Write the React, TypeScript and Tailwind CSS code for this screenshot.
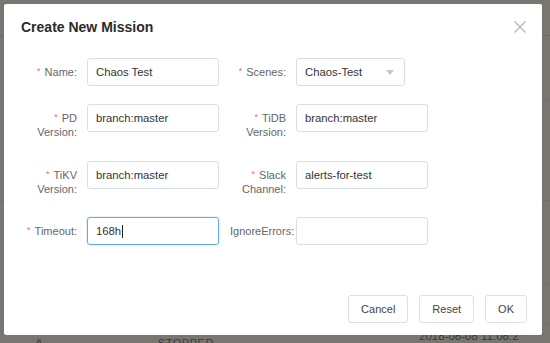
import React from "react";

const Req = () => <span className="text-[#f26b6b] text-[9px] mr-[4px] relative top-[-2px]">*</span>;

function Label({ children, req = true, lines }: { children?: React.ReactNode; req?: boolean; lines?: [string, string] }) {
  return (
    <div className="w-[56px] shrink-0 text-right text-[11px] leading-[12.5px] text-[#666] pt-[8px] whitespace-nowrap">
      {lines ? (
        <>
          <div>{req && <Req />}{lines[0]}</div>
          <div>{lines[1]}</div>
        </>
      ) : (
        <div>{req && <Req />}{children}</div>
      )}
    </div>
  );
}

function Input({ value, focused = false, w = "w-[132px]" }: { value: string; focused?: boolean; w?: string }) {
  return (
    <div
      className={`${w} h-[28px] shrink-0 rounded-[3px] border flex items-center pl-[8px] text-[11.3px] text-[#333] ${
        focused ? "border-[#66a9ee] shadow-[0_0_0_1px_rgba(102,169,238,0.15)]" : "border-[#d9dee6]"
      }`}
    >
      <span>{value}</span>
      {focused && <span className="w-px h-[13px] bg-[#222] ml-[1px]" />}
    </div>
  );
}

export default function App() {
  return (
    <div className="w-[550px] h-[343px] bg-[#787671] relative overflow-hidden font-['Liberation_Sans',Arial,sans-serif]">
      {/* background page content behind overlay */}
      <div className="absolute left-0 right-0 top-[35px] h-px bg-[#6c6a66]" />
      <div className="absolute left-0 right-0 top-[100px] h-px bg-[#706e6a]" />
      <div className="absolute left-0 right-0 top-[200px] h-px bg-[#706e6a]" />
      <div className="absolute left-0 right-0 top-[283px] h-px bg-[#706e6a]" />
      <div className="absolute left-0 right-0 top-[323px] h-px bg-[#706e6a]" />
      <div className="absolute left-[158px] top-[335px] text-[11px] text-[#3a3936] tracking-[0.5px]">STOPPED</div>
      <div className="absolute left-[419px] top-[328px] text-[11.5px] text-[#3a3936]">2018-08-08 11:08:2</div>
      <div className="absolute left-[36px] top-[336px] text-[10px] text-[#3a3936]">ñ</div>

      {/* modal */}
      <div className="relative ml-[4px] mt-[4px] w-[538px] h-[331px] bg-white rounded-[2px] flex flex-col">
        <svg className="absolute right-[16px] top-[17px]" width="12" height="12" viewBox="0 0 12 12">
          <path d="M0.5 0.5 L11.5 11.5 M11.5 0.5 L0.5 11.5" stroke="#b5b8bd" strokeWidth="1.3" fill="none" />
        </svg>
        <div className="h-[54px] pl-[17px] pt-[15px]">
          <div className="text-[14px] leading-[16px] font-bold text-[#2b2b2b]">Create New Mission</div>
        </div>

        <div className="pl-[17px] flex flex-col">
          {/* row 1 */}
          <div className="h-[46px] flex gap-[11px]">
            <div className="w-[198px] flex gap-[10px]">
              <Label>Name:</Label>
              <Input value="Chaos Test" />
            </div>
            <div className="w-[198px] flex gap-[10px]">
              <Label>Scenes:</Label>
              <div className="w-[109px] h-[28px] shrink-0 rounded-[3px] border border-[#d9dee6] flex items-center justify-between pl-[8px] pr-[10px] text-[11.3px] text-[#333]">
                <span>Chaos-Test</span>
                <svg width="8" height="5" viewBox="0 0 8 5">
                  <path d="M0 0 L8 0 L4 5 Z" fill="#c4c7cc" />
                </svg>
              </div>
            </div>
          </div>
          {/* row 2 */}
          <div className="h-[57px] flex gap-[11px]">
            <div className="w-[198px] flex gap-[10px]">
              <Label lines={["PD", "Version:"]} />
              <Input value="branch:master" />
            </div>
            <div className="w-[198px] flex gap-[10px]">
              <Label lines={["TiDB", "Version:"]} />
              <Input value="branch:master" />
            </div>
          </div>
          {/* row 3 */}
          <div className="h-[56px] flex gap-[11px]">
            <div className="w-[198px] flex gap-[10px]">
              <Label lines={["TiKV", "Version:"]} />
              <Input value="branch:master" />
            </div>
            <div className="w-[198px] flex gap-[10px]">
              <Label lines={["Slack", "Channel:"]} />
              <Input value="alerts-for-test" />
            </div>
          </div>
          {/* row 4 */}
          <div className="h-[28px] flex gap-[11px]">
            <div className="w-[198px] flex gap-[10px]">
              <Label>Timeout:</Label>
              <Input value="168h" focused />
            </div>
            <div className="w-[198px] flex gap-[10px]">
              <div className="w-[56px] shrink-0 text-left text-[11px] leading-[12.5px] text-[#666] pt-[8px] whitespace-nowrap">
                IgnoreErrors:
              </div>
              <Input value="" />
            </div>
          </div>
        </div>

        <div className="mt-auto flex justify-end gap-[11px] pr-[15px] pb-[12px]">
          {["Cancel", "Reset", "OK"].map((t) => (
            <div
              key={t}
              className="h-[28px] px-[12px] flex items-center rounded-[3px] border border-[#dcdfe3] text-[11px] text-[#444]"
            >
              {t}
            </div>
          ))}
        </div>
      </div>
    </div>
  );
}
